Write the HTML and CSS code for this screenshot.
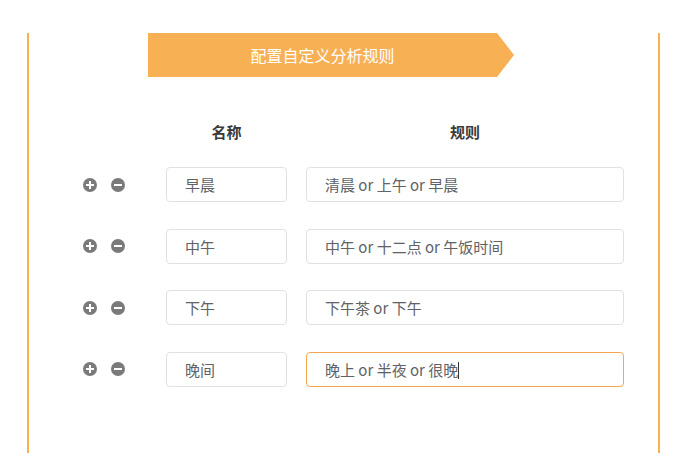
FILE: index.html
```html
<!DOCTYPE html>
<html lang="zh-CN">
<head>
<meta charset="utf-8">
<title>配置自定义分析规则</title>
<link rel="stylesheet" href="styles.css">
</head>
<body>
<div class="panel">
  <div class="banner">配置自定义分析规则</div>
  <div class="head">
    <div class="spacer"></div>
    <div class="col-name">名称</div>
    <div class="col-rule">规则</div>
  </div>
  <div class="rows">
    <div class="row">
      <div class="ops">
        <span class="op plus"></span>
        <span class="op minus"></span>
      </div>
      <div class="field name">早晨</div>
      <div class="field rule">清晨 or 上午 or 早晨</div>
    </div>
    <div class="row">
      <div class="ops">
        <span class="op plus"></span>
        <span class="op minus"></span>
      </div>
      <div class="field name">中午</div>
      <div class="field rule">中午 or 十二点 or 午饭时间</div>
    </div>
    <div class="row">
      <div class="ops">
        <span class="op plus"></span>
        <span class="op minus"></span>
      </div>
      <div class="field name">下午</div>
      <div class="field rule">下午茶 or 下午</div>
    </div>
    <div class="row">
      <div class="ops">
        <span class="op plus"></span>
        <span class="op minus"></span>
      </div>
      <div class="field name">晚间</div>
      <div class="field rule focus">晚上 or 半夜 or 很晚<span class="caret"></span></div>
    </div>
  </div>
</div>
</body>
</html>
```
FILE: styles.css
```css
html, body {
  margin: 0;
  padding: 0;
  background: #ffffff;
}
body {
  font-family: "Noto Sans CJK SC", "Noto Sans", sans-serif;
  width: 698px;
  height: 468px;
  overflow: hidden;
}
.panel {
  box-sizing: border-box;
  margin: 33px 0 0 27px;
  width: 633px;
  height: 420px;
  border-left: 2px solid #f8b055;
  border-right: 2px solid #f8b055;
}
.banner {
  margin-left: 119px;
  width: 366px;
  height: 44px;
  background: #f8b055;
  color: #ffffff;
  font-size: 16px;
  line-height: 44px;
  padding-right: 17px;
  box-sizing: border-box;
  text-align: center;
  clip-path: polygon(0 0, 349px 0, 100% 50%, 349px 100%, 0 100%);
}
.head {
  display: flex;
  margin-top: 43px;
  height: 22px;
  align-items: center;
  font-size: 15px;
  font-weight: bold;
  color: #3a3a3a;
}
.spacer {
  width: 137px;
}
.col-name {
  width: 121px;
  text-align: center;
}
.col-rule {
  margin-left: 19px;
  width: 318px;
  text-align: center;
}
.rows {
  margin-top: 25px;
  display: flex;
  flex-direction: column;
  gap: 26.67px;
}
.row {
  display: flex;
  align-items: center;
  height: 35px;
  padding-left: 54px;
}
.ops {
  display: flex;
  gap: 14px;
  width: 42px;
  margin-right: 41px;
}
.op {
  position: relative;
  width: 14px;
  height: 14px;
  border-radius: 50%;
  background: #7a7a7a;
}
.op::before,
.op::after {
  content: "";
  position: absolute;
  background: #ffffff;
  left: 3px;
  top: 6px;
  width: 8px;
  height: 2px;
}
.plus::after {
  left: 6px;
  top: 3px;
  width: 2px;
  height: 8px;
}
.minus::after {
  display: none;
}
.field {
  box-sizing: border-box;
  height: 35px;
  border: 1px solid #dfe1e6;
  border-radius: 4px;
  padding-left: 18px;
  padding-top: 1px;
  font-size: 15px;
  line-height: 32px;
  color: #606266;
  white-space: nowrap;
}
.name {
  width: 121px;
}
.rule {
  margin-left: 19px;
  width: 318px;
}
.focus {
  border-color: #f6a650;
}
.caret {
  display: inline-block;
  width: 1px;
  height: 17px;
  background: #333333;
  vertical-align: -3px;
}
```
